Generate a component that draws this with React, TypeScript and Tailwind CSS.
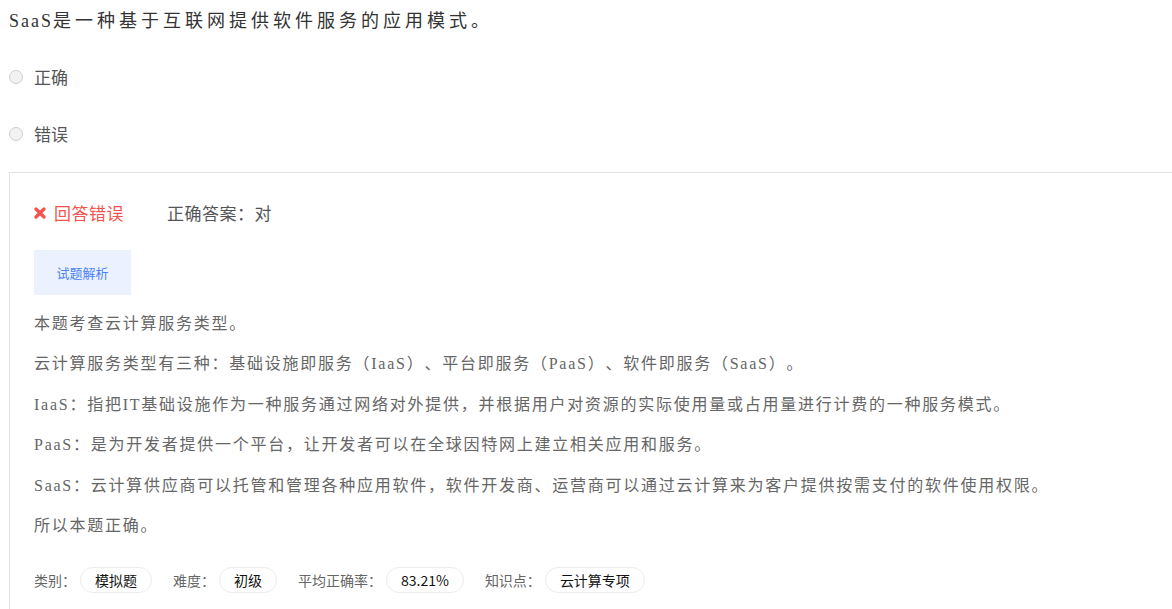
import React from "react";

const serif = { fontFamily: '"Liberation Serif", "Noto Sans CJK SC", serif' };
const sans = { fontFamily: '"Noto Sans CJK SC", "Noto Sans", sans-serif' };

const options = ["正确", "错误"];

const analysis = [
    "本题考查云计算服务类型。",
    "云计算服务类型有三种：基础设施即服务（IaaS）、平台即服务（PaaS）、软件即服务（SaaS）。",
    "IaaS：指把IT基础设施作为一种服务通过网络对外提供，并根据用户对资源的实际使用量或占用量进行计费的一种服务模式。",
    "PaaS：是为开发者提供一个平台，让开发者可以在全球因特网上建立相关应用和服务。",
    "SaaS：云计算供应商可以托管和管理各种应用软件，软件开发商、运营商可以通过云计算来为客户提供按需支付的软件使用权限。",
    "所以本题正确。",
];

const tags = [
    { label: "类别：", value: "模拟题" },
    { label: "难度：", value: "初级" },
    { label: "平均正确率：", value: "83.21%" },
    { label: "知识点：", value: "云计算专项" },
];

function Radio() {
    return <span className="block h-[14px] w-[14px] rounded-full border border-[#cfcfcf] bg-[#f2f2f2]" />;
}

export default function App() {
    return (
        <div className="min-h-screen bg-white overflow-hidden [text-spacing-trim:space-all]" style={sans}>
            <p className="pl-[9px] pt-[7px] text-[18px] leading-[28px] tracking-[4px] text-[#333]" style={serif}>
                <span className="tracking-[2px]">SaaS</span>是一种基于互联网提供软件服务的应用模式。
            </p>

            <div className="mt-[13px]">
                {options.map((opt) => (
                    <div key={opt} className="flex h-[57px] items-center pl-[9px]">
                        <Radio />
                        <span className="ml-[11px] text-[17px] text-[#555]">{opt}</span>
                    </div>
                ))}
            </div>

            <div className="ml-[9px] mt-[10px] border-l border-t border-[#e2e2e2] pl-[24px] pb-[20px]">
                <div className="mt-[20px] flex h-[40px] items-center text-[17px]">
                    <svg width="12" height="12" viewBox="0 0 12 12" className="mr-[8px]">
                        <path d="M2 2 L10 10 M10 2 L2 10" stroke="#f5514d" strokeWidth="3.2" strokeLinecap="round" />
                    </svg>
                    <span className="text-[#f5514d] tracking-[0.5px]">回答错误</span>
                    <span className="ml-[43px] text-[#555] tracking-[0.5px]">正确答案：对</span>
                </div>

                <button className="mt-[17px] flex h-[45px] w-[97px] items-center justify-center bg-[#ebf1fe] text-[13px] text-[#4c84f5]">
                    试题解析
                </button>

                <div className="mt-[9px] text-[16px] leading-[40.4px] tracking-[1.75px] text-[#666]" style={serif}>
                    {analysis.map((line, i) => (
                        <p key={i} className="whitespace-nowrap">{line}</p>
                    ))}
                </div>

                <div className="mt-[21px] flex items-center text-[14px]">
                    {tags.map((t) => (
                        <div key={t.label} className="mr-[21px] flex items-center">
                            <span className="text-[#666]">{t.label}</span>
                            <span className="ml-[4px] flex h-[26px] items-center rounded-full border border-[#ececec] px-[14px] text-[#111]">
                                {t.value}
                            </span>
                        </div>
                    ))}
                </div>
            </div>
        </div>
    );
}
